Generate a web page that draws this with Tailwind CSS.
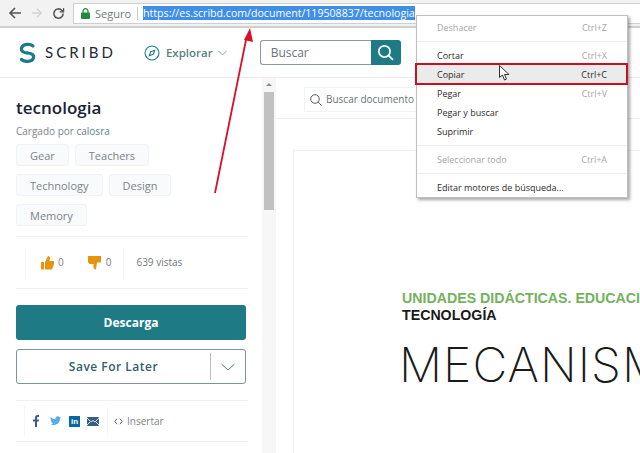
<!DOCTYPE html>
<html lang="en">
<head>
<meta charset="UTF-8">
<title>tecnologia</title>
<script src="https://cdn.jsdelivr.net/npm/@tailwindcss/browser@4"></script>
</head>
<body class="w-[640px] h-[453px] overflow-hidden bg-white relative font-['Open_Sans',sans-serif]">
  <!-- browser toolbar -->
  <div class="h-[28px] bg-[#f2f2f2] border-b-2 border-[#d0d0d0] flex items-center overflow-hidden">
    <svg class="ml-[8px] w-[14px] h-[14px] shrink-0" viewBox="0 0 14 14" fill="none" stroke="#555" stroke-width="1.6"><path d="M13 7H2M7 2L2 7l5 5"/></svg>
    <svg class="ml-[9px] w-[12px] h-[12px] shrink-0" viewBox="0 0 14 14" fill="none" stroke="#d4d4d4" stroke-width="1.6"><path d="M1 7h11M7 2l5 5-5 5"/></svg>
    <svg class="ml-[9px] w-[13px] h-[13px] shrink-0" viewBox="0 0 14 14" fill="none" stroke="#555" stroke-width="1.7"><path d="M12 7a5 5 0 1 1-1.500-3.500L12 5"/><path d="M12.500 1v4.200H8.300" stroke-width="1.300"/></svg>
    <div class="ml-[8px] flex-1 h-[21px] bg-white border border-[#cfcfcf] border-r-0 flex items-center">
      <svg class="ml-[7px] w-[9px] h-[11px] shrink-0" viewBox="0 0 9 11"><path d="M2 5V3.200a2.500 2.500 0 0 1 5 0V5" fill="none" stroke="#1f8a3c" stroke-width="1.200"/><rect y="4.500" width="9" height="6.500" rx="1" fill="#1f8a3c"/></svg>
      <span class="ml-[5px] text-[11px] text-[#6f7b77] leading-none">Seguro</span>
      <span class="ml-[6px] w-px h-[13px] bg-[#c9c9c9]"></span>
      <span class="ml-[5px] bg-[#3f8fe8] text-white text-[10.6px] leading-[14px] h-[14px] whitespace-nowrap">https://es.scribd.com/document/119508837/tecnologia</span>
    </div>
  </div>

  <!-- scribd header -->
  <header class="h-[50px] bg-white border-b border-[#eaecee] flex items-center">
    <svg class="ml-[18px] w-[19px] h-[22px] shrink-0" viewBox="0 0 18 22" fill="none" stroke="#1e7b85" stroke-width="3.200" stroke-linecap="round"><path d="M14.500 4C12 1.800 4.500 1.200 3 6c-.8 3.500 3 4.800 6 5"/><path d="M3 17.500c2.500 2.500 10.500 3 12-1.800.8-3.200-3-4.500-6-4.700"/></svg>
    <span class="ml-[8px] text-[15px] tracking-[3px] text-[#1e2a38] font-['Lato',sans-serif] leading-none">SCRIBD</span>
    <svg class="ml-[28px] w-[16px] h-[16px] shrink-0" viewBox="0 0 16 16" fill="none" stroke="#1e7b85" stroke-width="1.100"><circle cx="8" cy="8" r="7"/><path d="M10.700 5.300L9.300 9.300 5.300 10.700 6.700 6.700z"/></svg>
    <span class="ml-[6px] text-[11.5px] font-semibold text-[#5b7f80] leading-none">Explorar</span>
    <svg class="ml-[5px] w-[9px] h-[6px] shrink-0" viewBox="0 0 9 6" fill="none" stroke="#8aa0a3"><path d="M.5 1l4 4 4-4"/></svg>
    <div class="ml-[33px] w-[141px] h-[25px] flex shrink-0">
      <div class="flex-1 border border-[#8f999d] border-r-0 rounded-l-[3px] pl-[10px] text-[12px] text-[#6a7378] leading-[23px]">Buscar</div>
      <div class="w-[30px] bg-[#1e7b85] rounded-r-[3px] flex items-center justify-center">
        <svg class="w-[17px] h-[17px]" viewBox="0 0 16 16" fill="none" stroke="#fff" stroke-width="1.600"><circle cx="7" cy="7" r="5.300"/><path d="M11 11l4 4"/></svg>
      </div>
    </div>
  </header>

  <div class="flex h-[375px]">
    <!-- left sidebar -->
    <aside class="w-[262px] shrink-0 pl-[16px] pr-[16px] pt-[18px]">
      <h1 class="text-[17px] font-semibold text-[#1b2233] leading-[24px]">tecnologia</h1>
      <p class="text-[10px] text-[#7c8489] leading-[14px] mt-[4px]">Cargado por <span class="text-[#5b8388]">calosra</span></p>
      <div class="mt-[6px] flex flex-wrap gap-x-[6px] gap-y-[8px] w-[210px]">
        <span class="h-[22px] px-[13px] bg-[#f9fafb] border border-[#f2f3f5] rounded-[3px] text-[11px] leading-[21px] text-[#7b8389]">Gear</span>
        <span class="h-[22px] px-[13px] bg-[#f9fafb] border border-[#f2f3f5] rounded-[3px] text-[11px] leading-[21px] text-[#7b8389]">Teachers</span>
        <span class="h-[22px] px-[13px] bg-[#f9fafb] border border-[#f2f3f5] rounded-[3px] text-[11px] leading-[21px] text-[#7b8389]">Technology</span>
        <span class="h-[22px] px-[13px] bg-[#f9fafb] border border-[#f2f3f5] rounded-[3px] text-[11px] leading-[21px] text-[#7b8389]">Design</span>
        <span class="h-[22px] px-[13px] bg-[#f9fafb] border border-[#f2f3f5] rounded-[3px] text-[11px] leading-[21px] text-[#7b8389]">Memory</span>
      </div>
      <div class="mt-[10px] h-[52px] border-t border-[#f0f1f3] flex items-center w-[232px]">
        <div class="ml-[9px] h-[32px] pl-[15px] pr-[12px] border-x border-[#f6f7f8] flex items-center">
          <svg class="w-[13px] h-[14px] shrink-0" viewBox="0 0 13 14" fill="#e8930c"><rect y="6" width="3" height="7.500"/><path d="M4 6l3-6c1.500 0 2 1 2 2l-.5 3H13v3l-2 5.500H4z"/></svg>
          <span class="ml-[4px] text-[10px] text-[#777f85]">0</span>
          <svg class="ml-[24px] w-[13px] h-[14px] shrink-0" viewBox="0 0 13 14" fill="#e8930c"><path d="M0 0h13v6.500H9l-1 7c-1.600 0-2.500-1-2.500-2.200V8H1.500L0 6z"/></svg>
          <span class="ml-[5px] text-[10px] text-[#777f85]">0</span>
        </div>
        <span class="ml-[12px] text-[10px] text-[#6f777c]">639 vistas</span>
      </div>
      <div class="border-t border-[#f0f1f3] pt-[16px] w-[232px]">
        <div class="w-[230px] h-[35px] bg-[#1e7b85] rounded-[3px] text-center text-[12px] font-bold text-white leading-[35px]">Descarga</div>
        <div class="w-[230px] mt-[9px] h-[35px] border border-[#7e9598] rounded-[3px] flex items-center">
          <span class="flex-1 text-center text-[12px] font-semibold tracking-[0.5px] text-[#2f6266]">Save For Later</span>
          <span class="w-px h-[27px] bg-[#b5bfc1]"></span>
          <span class="w-[34px] flex justify-center"><svg class="w-[14px] h-[8px]" viewBox="0 0 14 8" fill="none" stroke="#52787c"><path d="M.5 1L7 7l6.500-6"/></svg></span>
        </div>
      </div>
      <div class="mt-[16px] h-[42px] border-y border-[#f0f1f3] flex items-center w-[232px]">
        <div class="ml-[8px] h-[30px] pl-[8px] pr-[8px] border-x border-[#f6f7f8] flex items-center">
          <svg class="w-[6px] h-[12px] shrink-0" viewBox="0 0 6 12" fill="#3b5998"><path d="M2 12V6.500H0v-2h2V3c0-2 1-3 2.600-3H6v2H5c-.8 0-1 .4-1 1v1.500h2l-.3 2H4V12z"/></svg>
          <svg class="ml-[11px] w-[11px] h-[10px] shrink-0" viewBox="0 0 12 10" fill="#55acee"><path d="M12 1.200l-1.300.4 1-1.300-1.400.7A2.400 2.400 0 0 0 6 3C4 3 2 2 .8.500.2 1.800.5 3 1.500 3.700L.5 3.400C.5 4.600 1.300 5.500 2.500 5.800H1.400c.3 1 1.100 1.500 2.200 1.600C2.600 8.200 1.300 8.500 0 8.400 4.500 11 11 8.500 10.800 2.600z"/></svg>
          <span class="ml-[8px] w-[11px] h-[11px] bg-[#0a66a0] text-white text-[8px] font-bold leading-[11px] text-center font-['Liberation_Sans',sans-serif]">in</span>
          <svg class="ml-[7px] w-[12px] h-[9px] shrink-0" viewBox="0 0 12 9"><rect width="12" height="9" rx="1" fill="#35607e"/><path d="M0 1l4 4 2-1.500L8 5l4-4M0 8l3-3M12 8L9 5" fill="none" stroke="#fff" stroke-width=".8"/></svg>
        </div>
        <svg class="ml-[6px] w-[9px] h-[7px] shrink-0" viewBox="0 0 9 7" fill="none" stroke="#555e63"><path d="M3 .8L.8 3.500 3 6.200M6 .8l2.200 2.700L6 6.200"/></svg>
        <span class="ml-[4px] text-[10px] text-[#7b8389] whitespace-nowrap">Insertar</span>
      </div>
    </aside>

    <!-- scrollbar -->
    <div class="w-[14px] shrink-0 bg-[#f7f7f7] px-[2px] pt-[5px]">
      <svg class="mx-auto w-[6px] h-[3px]" viewBox="0 0 6 3" fill="#8a8a8a"><path d="M3 0l3 3H0z"/></svg>
      <div class="mt-[6px] h-[118px] bg-[#c1c1c1]"></div>
    </div>

    <!-- document area -->
    <main class="flex-1 min-w-0 overflow-hidden">
      <div class="h-[41px] border-b border-[#eff0f1] pt-[9px] pl-[28px]">
        <div class="w-[120px] h-[25px] bg-white border border-[#f1f2f3] flex items-center pl-[5px]">
          <svg class="w-[12px] h-[12px] shrink-0" viewBox="0 0 12 12" fill="none" stroke="#555e63"><circle cx="5" cy="5" r="4.300"/><path d="M8 8l3.500 3.500"/></svg>
          <span class="ml-[4px] text-[10px] text-[#6a7378] whitespace-nowrap">Buscar documento</span>
        </div>
      </div>
      <div class="mt-[31px] ml-[17px] h-[320px] border-l border-t border-[#f0f0f0] pl-[108px] pt-[139px]">
        <p class="text-[14.2px] font-bold text-[#74b25e] leading-[16px] whitespace-nowrap font-['Liberation_Sans',sans-serif]">UNIDADES DIDÁCTICAS. EDUCACIÓN</p>
        <p class="mt-[1px] text-[14.2px] font-bold text-[#1a1a1a] leading-[17px] whitespace-nowrap font-['Liberation_Sans',sans-serif]">TECNOLOGÍA</p>
        <p class="mt-[16px] -ml-[3px] text-[48px] tracking-[1px] font-extralight text-[#1a1a1a] leading-[50px] whitespace-nowrap font-['Inter',sans-serif]">MECANISMOS</p>
      </div>
    </main>
  </div>

  <!-- red annotation arrow -->
  <svg class="absolute left-[205px] top-[28px] w-[50px] h-[170px]" viewBox="0 0 50 170" fill="none">
    <path d="M10 165L41 12" stroke="#d8102a" stroke-width="1.800"/>
    <path d="M45 0l3 14-9-2z" fill="#d8102a"/>
  </svg>

  <!-- context menu -->
  <div class="absolute left-[416px] top-[15px] w-[212px] h-[183px] bg-white border border-[#bfbfbf] shadow-[2px_2px_3px_rgba(0,0,0,0.35)] pt-[2px] text-[9px] text-[#2b2b2b]">
    <div class="h-[19px] pl-[20px] pr-[20px] flex items-center justify-between text-[#a6a6a6]"><span>Deshacer</span><span>Ctrl+Z</span></div>
    <div class="my-[4px] h-px bg-[#eeeeee]"></div>
    <div class="h-[19px] px-[20px] flex items-center justify-between"><span>Cortar</span><span class="text-[#a6a6a6]">Ctrl+X</span></div>
    <div class="relative h-[19px] px-[20px] flex items-center justify-between bg-[#ebebeb]"><span>Copiar</span><span>Ctrl+C</span>
      <div class="absolute -left-[2px] -right-[1px] -top-[2px] -bottom-[1px] border-2 border-[#c8101e]"></div>
    </div>
    <div class="h-[19px] px-[20px] flex items-center justify-between"><span>Pegar</span><span class="text-[#a6a6a6]">Ctrl+V</span></div>
    <div class="h-[19px] px-[20px] flex items-center"><span>Pegar y buscar</span></div>
    <div class="h-[19px] px-[20px] flex items-center"><span>Suprimir</span></div>
    <div class="my-[4px] h-px bg-[#eeeeee]"></div>
    <div class="h-[19px] px-[20px] flex items-center justify-between text-[#a6a6a6]"><span>Seleccionar todo</span><span>Ctrl+A</span></div>
    <div class="my-[4px] h-px bg-[#eeeeee]"></div>
    <div class="h-[19px] px-[20px] flex items-center"><span>Editar motores de búsqueda...</span></div>
  </div>

  <!-- mouse pointer -->
  <svg class="absolute left-[499px] top-[65px] w-[11px] h-[16px]" viewBox="0 0 11 16"><path d="M.5.500v12l3-2.500 2 5 2-1-2-4.500H10z" fill="#fff" stroke="#333"/></svg>
</body>
</html>
